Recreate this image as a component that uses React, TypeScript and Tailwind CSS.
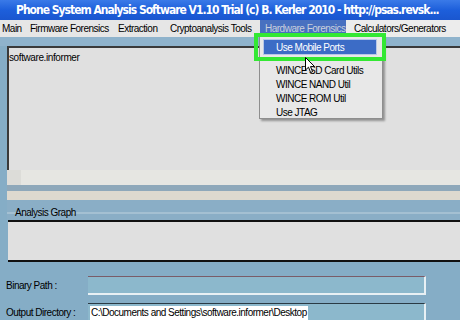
import React from "react";

const font = { fontFamily: '"Liberation Sans", Arial, sans-serif' };

const menuItems = [
  { label: "Main", w: "w-[28px]" },
  { label: "Firmware Forensics", w: "w-[88px]" },
  { label: "Extraction", w: "w-[52px]" },
  { label: "Cryptoanalysis Tools", w: "w-[92px]" },
];

const App = () => {
  return (
    <div
      className="relative w-[460px] h-[320px] overflow-hidden bg-[#85adc6] text-black text-[10px] tracking-[-0.5px]"
      style={font}
    >
      {/* Title bar */}
      <div className="h-[20px] flex items-center pl-[16px] bg-gradient-to-b from-[#3a7ae8] via-[#1d5fdb] to-[#1a56cf]">
        <span
          className="text-[12px] font-bold text-white tracking-[-1px] whitespace-nowrap"
          style={{ fontFamily: '"DejaVu Sans Condensed", "Liberation Sans", sans-serif' }}
        >
          Phone System Analysis Software V1.10 Trial (c) B. Kerler 2010 - http://psas.revsk...
        </span>
      </div>

      {/* Menu bar */}
      <div className="h-[17px] flex items-center bg-[#e6e6e6] whitespace-nowrap">
        {menuItems.map((m) => (
          <span key={m.label} className={`${m.w} pl-[2px]`}>
            {m.label}
          </span>
        ))}
        <span className="h-full w-[86px] flex items-center pl-[5px] bg-[#4870c0] text-[#c9cfdc]">
          Hardware Forensics
        </span>
        <span className="h-full flex-1 flex items-center pl-[8px] bg-[#ececec]">
          Calculators/Generators
        </span>
      </div>

      {/* Upper blue gap */}
      <div className="h-[9px] bg-[#8fb3cc]" />

      {/* Output text area */}
      <div className="pl-[7px]">
        <div className="h-[124px] bg-[#e0e0e0] border-t-2 border-l-2 border-[#3a3a3a] pt-[2px] tracking-[-0.4px]">
          software.informer
        </div>
        <div className="h-[15px] bg-[#e6e6e2] flex">
          <div className="w-[14px] bg-[#dcdcd8]" />
        </div>
      </div>

      <div className="h-[6px] bg-[#8ea8ba] ml-[7px]" />
      <div className="h-[9px] bg-[#ddd9cf] ml-[7px]" />

      {/* Analysis Graph */}
      <div className="relative h-[20px] ml-[7px] bg-[#8aaec6] flex items-end pl-[8px]">
        <div className="absolute left-0 right-0 top-[12px] h-[2px] bg-[#a4c0d2]" />
        <span className="relative">Analysis Graph</span>
      </div>
      <div className="h-[42px] ml-[8px] bg-[#e0e0e0] border-t-2 border-b-2 border-[#111]" />

      {/* Paths */}
      <div className="flex flex-col gap-[8px] pt-[14px] pl-[6px] whitespace-nowrap">
        <div className="flex items-center h-[19px]">
          <span className="w-[82px]">Binary Path :</span>
          <div className="w-[338px] h-[19px] border-t border-[#7a5c68] border-r-2 border-b-2 border-r-[#e8f0f4] border-b-[#e8f0f4] bg-[#8cb8cc]" />
        </div>
        <div className="flex items-center h-[19px]">
          <span className="w-[82px]">Output Directory :</span>
          <div className="w-[338px] h-[19px] border-t border-[#2a3a44] border-r-2 border-r-[#e8f0f4] bg-[#8cb8cc] pl-[2px] flex items-center">
            <span className="bg-white px-[1px] leading-[14px]">
              C:\Documents and Settings\software.informer\Desktop
            </span>
          </div>
        </div>
      </div>

      {/* Dropdown menu */}
      <div className="absolute left-[259px] top-[36px] w-[124px] h-[83px] bg-[#e8e8e8] border border-[#8e8e8e] shadow-[2px_2px_2px_rgba(0,0,0,0.35)]">
        <div className="h-[27px]" />
        <div className="flex flex-col pl-[16px] leading-[14px]">
          <span>WINCE SD Card Utils</span>
          <span>WINCE NAND Util</span>
          <span>WINCE ROM Util</span>
          <span>Use JTAG</span>
        </div>
      </div>

      {/* Green highlight box */}
      <div className="absolute left-[254px] top-[33px] w-[132px] h-[28px] border-[4px] border-[#33e833] p-[2px] pl-[5px]">
        <div className="h-full w-[114px] bg-[#3c6cc6] border border-[#b8c8e8] flex items-center pl-[12px] text-white">
          Use Mobile Ports
        </div>
      </div>

      {/* Mouse cursor */}
      <svg
        className="absolute left-[305px] top-[57px]"
        width="11"
        height="17"
        viewBox="0 0 11 17"
      >
        <path
          d="M0.5 0.5 L0.5 13 L3.5 10.2 L5.6 15.5 L7.6 14.7 L5.5 9.6 L9.6 9.6 Z"
          fill="#fff"
          stroke="#000"
          strokeWidth="1"
        />
      </svg>
    </div>
  );
};

export default App;
